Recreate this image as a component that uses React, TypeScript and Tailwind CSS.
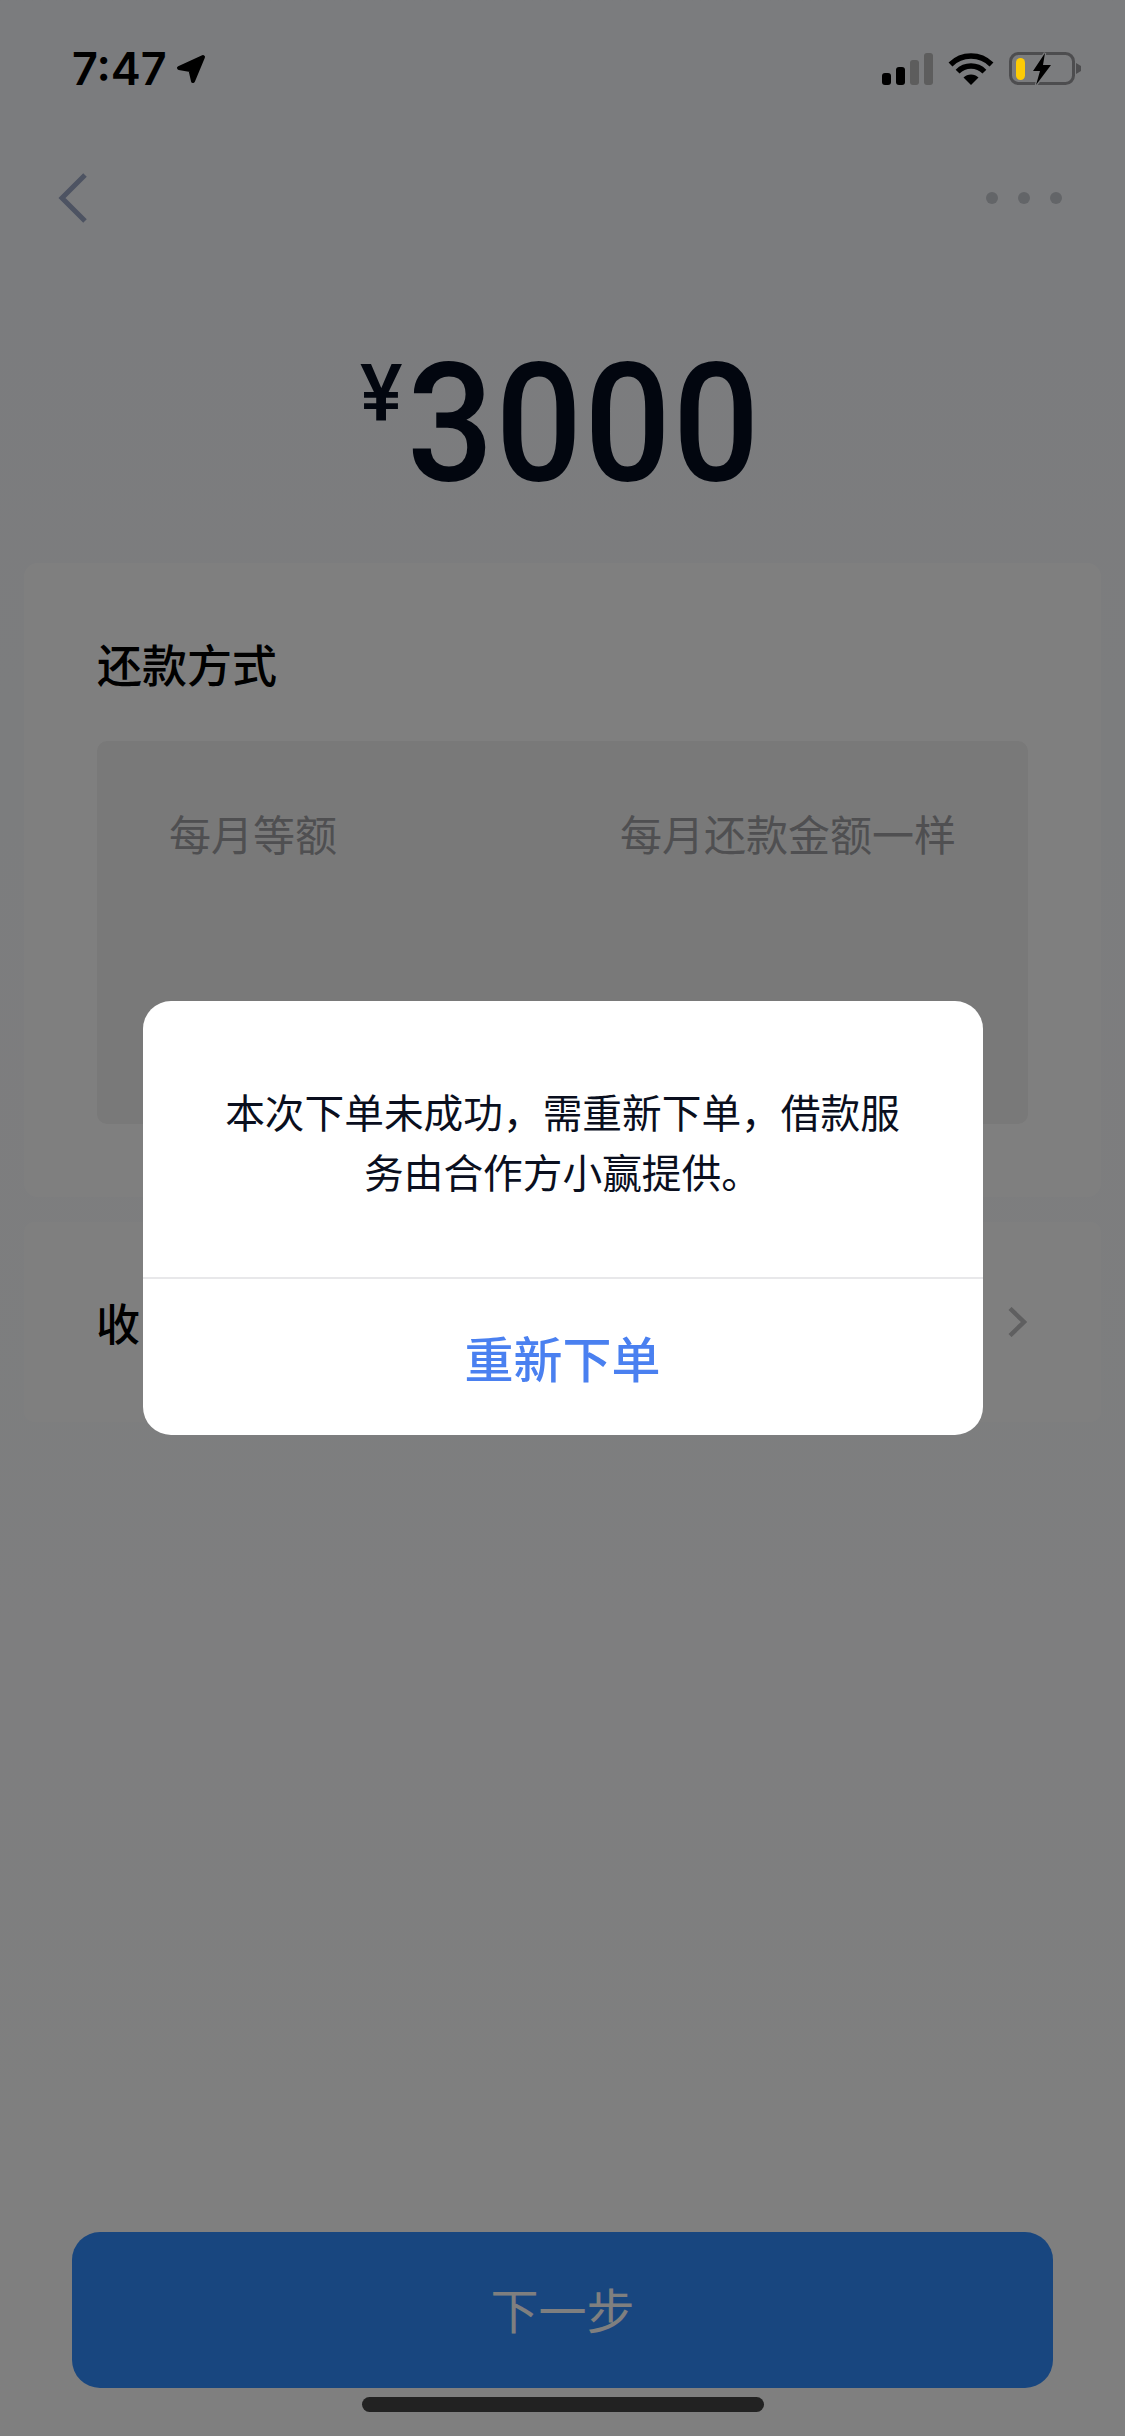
import React from "react";

const cjk = "font-['Noto_Sans_CJK_SC','Noto_Sans',sans-serif]";

const StatusBar: React.FC = () => {
   return (
      <div className="relative z-20 flex h-[86px] items-start justify-between pt-[52px] pl-[72px] pr-[43px]">
         <div className="flex items-center">
            <span className="font-['Inter',sans-serif] text-[45px] leading-[34px] font-semibold text-black">
               7:47
            </span>
            <svg width="30" height="30" viewBox="0 0 30 30" className="ml-[9px]">
               <path
                  d="M27 3 L3 14 L14.5 16 L17 27 Z"
                  fill="#000"
                  stroke="#000"
                  strokeWidth="4"
                  strokeLinejoin="round"
               />
            </svg>
         </div>
         <div className="flex items-start">
            <div className="flex h-[33px] items-end gap-[5px]">
               <div className="h-[12px] w-[9px] rounded-[3px] bg-black" />
               <div className="h-[18px] w-[9px] rounded-[3px] bg-black" />
               <div className="h-[25px] w-[9px] rounded-[3px] bg-[#5d5d5d]" />
               <div className="h-[32px] w-[9px] rounded-[3px] bg-[#5d5d5d]" />
            </div>
            <svg width="46" height="33" viewBox="0 0 46 33" className="ml-[15px]" fill="none">
               <path d="M23 33 L15.5 25.5 A10.6 10.6 0 0 1 30.5 25.5 Z" fill="#000" />
               <path d="M9.6 19.6 A19 19 0 0 1 36.4 19.6" stroke="#000" strokeWidth="5.5" />
               <path d="M2.5 12.5 A29 29 0 0 1 43.5 12.5" stroke="#000" strokeWidth="5.5" />
            </svg>
            <svg width="73" height="33" viewBox="0 0 73 33" className="ml-[15px]" fill="none">
               <rect x="1.5" y="1.5" width="63" height="30" rx="8" stroke="#4d4d4f" strokeWidth="3" />
               <rect x="7" y="6" width="9" height="22" rx="4.5" fill="#fdcb05" />
               <path d="M36 1 L24 19 H31 L27 33 L42 13 H34 Z" fill="#000" stroke="#7c7d7f" strokeWidth="2.5" paintOrder="stroke" />
               <path d="M67 11 L72 14 V19 L67 22 Z" fill="#4d4d4f" />
            </svg>
         </div>
      </div>
   );
};

const App: React.FC = () => {
   return (
      <div className={`relative flex h-[2436px] w-[1125px] flex-col overflow-hidden bg-linear-to-b from-[#f6f8fc] to-white ${cjk}`}>
         <StatusBar />

         <div className="mt-[87px] flex h-[50px] items-center justify-between pl-[58px] pr-[63px]">
            <svg width="30" height="50" viewBox="0 0 30 50" fill="none">
               <path d="M27 2 L4 25 L27 48" stroke="#9aa6c4" strokeWidth="5" />
            </svg>
            <div className="flex gap-[20px]">
               <div className="h-[12px] w-[12px] rounded-full bg-[#c6cad0]" />
               <div className="h-[12px] w-[12px] rounded-full bg-[#c6cad0]" />
               <div className="h-[12px] w-[12px] rounded-full bg-[#c6cad0]" />
            </div>
         </div>

         <div className="mt-[131px] flex h-[127px] items-start pl-[360px] font-['Roboto',sans-serif] text-[#040c1e]">
            <span className="text-[80px] leading-[80px] font-medium">¥</span>
            <span className="ml-[4px] mt-[-13px] origin-left scale-x-[0.925] text-[165px] leading-[165px] font-medium tracking-[2px]">
               3000
            </span>
         </div>

         <div className="mx-[24px] mt-[82px] h-[634px] rounded-[14px] bg-white px-[73px] pt-[69px]">
            <div className="text-[45px] leading-[64px] font-medium text-black">还款方式</div>
            <div className="mt-[45px] flex h-[383px] items-start justify-between rounded-[10px] bg-[#f2f2f2] px-[72px] pt-[62px] text-[42px] leading-[60px] text-[#9e9ea2]">
               <span>每月等额</span>
               <span>每月还款金额一样</span>
            </div>
         </div>

         <div className="mx-[24px] mt-[25px] flex h-[200px] items-center justify-between rounded-[10px] bg-white pl-[72px] pr-[74px]">
            <span className="text-[44px] leading-[64px] font-medium text-black">收</span>
            <svg width="19" height="30" viewBox="0 0 19 30" fill="none">
               <path d="M2 1.5 L16 15 L2 28.5" stroke="#bfbfc0" strokeWidth="4.5" />
            </svg>
         </div>

         <button className="mx-[72px] mb-[48px] mt-auto flex h-[156px] items-center justify-center rounded-[28px] bg-[#308cfe] pb-[4px] text-[48px] text-white">
            下一步
         </button>

         {/* dim layer with the dialog on it */}
         <div className="absolute inset-0 z-10 flex items-center justify-center bg-black/50">
            <div className="w-[840px] overflow-hidden rounded-[28px] bg-white">
               <div className="h-[276px] px-[80px] pt-[80px] text-center text-[39.7px] leading-[60px] text-[#0a0f1e]">
                  本次下单未成功，需重新下单，借款服务由合作方小赢提供。
               </div>
               <div className="flex h-[158px] items-center justify-center border-t-2 border-[#e8e8ea] pb-[1px] text-[49px] font-medium text-[#4a80f0]">
                  重新下单
               </div>
            </div>
         </div>

         <div className="absolute bottom-[24px] left-[362px] z-20 h-[15px] w-[402px] rounded-full bg-[#222222]" />
      </div>
   );
};

export default App;
